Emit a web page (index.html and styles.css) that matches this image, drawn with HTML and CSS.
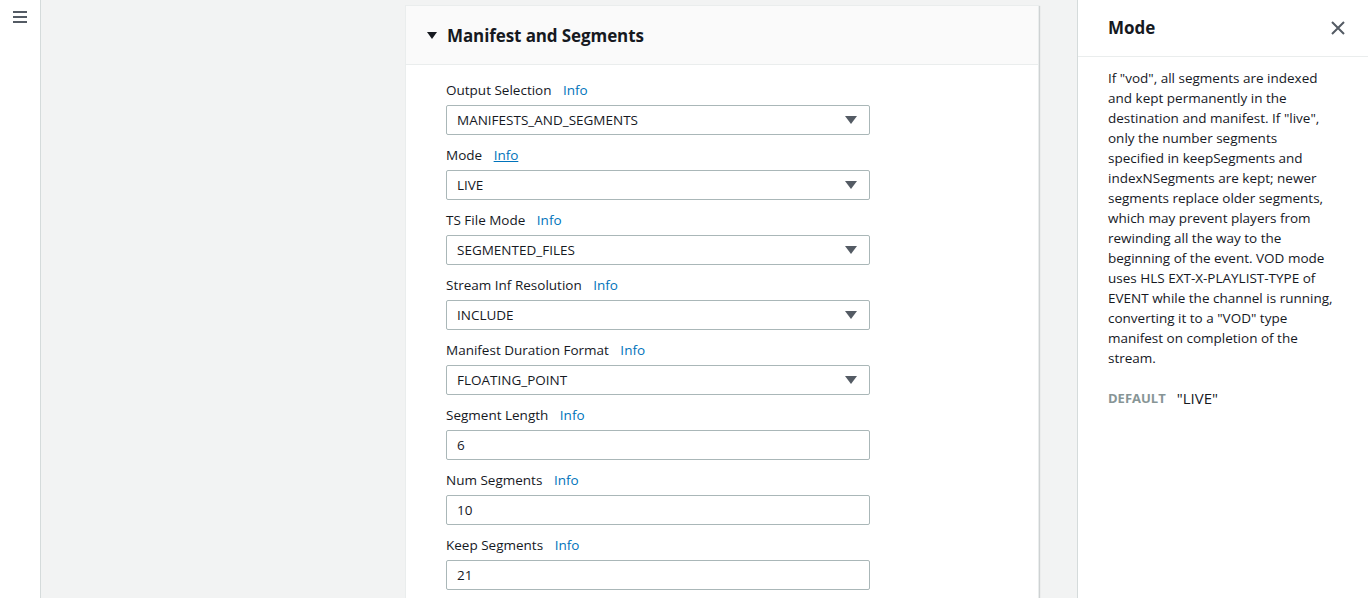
FILE: index.html
```html
<!DOCTYPE html>
<html>
<head>
<meta charset="utf-8">
<link rel="stylesheet" href="styles.css">
</head>
<body>
<div class="app">
  <nav class="nav">
    <svg class="burger" width="14" height="12" viewBox="0 0 14 12"><rect x="0" y="0" width="14" height="2" fill="#545b64"/><rect x="0" y="5" width="14" height="2" fill="#545b64"/><rect x="0" y="10" width="14" height="2" fill="#545b64"/></svg>
  </nav>
  <main class="main">
    <section class="card">
      <header class="card-head">
        <svg class="caret" width="10" height="8" viewBox="0 0 10 8"><polygon points="0,0 10,0 5,7" fill="#16191f"/></svg>
        <h2>Manifest and Segments</h2>
      </header>
      <div class="card-body">
        <div class="field"><div class="label">Output Selection <a class="info">Info</a></div><div class="select">MANIFESTS_AND_SEGMENTS<span class="tri"></span></div></div>
        <div class="field"><div class="label">Mode <a class="info ul">Info</a></div><div class="select">LIVE<span class="tri"></span></div></div>
        <div class="field"><div class="label">TS File Mode <a class="info">Info</a></div><div class="select">SEGMENTED_FILES<span class="tri"></span></div></div>
        <div class="field"><div class="label">Stream Inf Resolution <a class="info">Info</a></div><div class="select">INCLUDE<span class="tri"></span></div></div>
        <div class="field"><div class="label">Manifest Duration Format <a class="info">Info</a></div><div class="select">FLOATING_POINT<span class="tri"></span></div></div>
        <div class="field"><div class="label">Segment Length <a class="info">Info</a></div><div class="input">6</div></div>
        <div class="field"><div class="label">Num Segments <a class="info">Info</a></div><div class="input">10</div></div>
        <div class="field"><div class="label">Keep Segments <a class="info">Info</a></div><div class="input">21</div></div>
      </div>
    </section>
  </main>
  <aside class="panel">
    <header class="panel-head">
      <h2>Mode</h2>
      <svg class="close" width="14" height="14" viewBox="0 0 14 14"><path d="M1 1L13 13M13 1L1 13" stroke="#545b64" stroke-width="2" fill="none"/></svg>
    </header>
    <div class="panel-body">
      <p>If "vod", all segments are indexed and kept permanently in the destination and manifest. If "live", only the number segments specified in keepSegments and indexNSegments are kept; newer segments replace older segments, which may prevent players from rewinding all the way to the beginning of the event. VOD mode uses HLS EXT-X-PLAYLIST-TYPE of EVENT while the channel is running, converting it to a "VOD" type manifest on completion of the stream.</p>
      <div class="default"><span class="dk">DEFAULT</span><span class="dv">"LIVE"</span></div>
    </div>
  </aside>
</div>
</body>
</html>
```

FILE: styles.css
```css
* { box-sizing: border-box; }
html, body { margin: 0; padding: 0; }
body {
  font-family: "Open Sans", "Noto Sans", sans-serif;
  color: #16191f;
  font-size: 14px;
  background: #f2f3f3;
  overflow: hidden;
}
.app { display: flex; height: 598px; }
.nav {
  width: 41px;
  flex: none;
  background: #fff;
  border-right: 1px solid #d5dbdb;
  padding: 11px 0 0 13px;
}
.burger { display: block; }
.main {
  flex: 1;
  padding: 5px 0 0 364px;
}
.card {
  width: 634px;
  background: #fff;
  border: 1px solid #eaeded;
  box-shadow: 1px 1px 1px rgba(0,28,36,0.15);
  height: 620px;
}
.card-head {
  height: 59px;
  background: #fafafa;
  border-bottom: 1px solid #eaeded;
  display: flex;
  align-items: center;
  padding-left: 21px;
}
.caret { margin-right: 10px; margin-top: 1px; }
.card-head h2 {
  margin: 0;
  font-size: 17px;
  font-weight: 700;
  letter-spacing: -0.1px;
}
.card-body { padding: 15px 0 0 40px; }
.field { width: 424px; height: 65px; }
.label {
  height: 21px;
  line-height: 21px;
  font-size: 13.5px;
  margin-bottom: 4px;
}
.info { color: #0073bb; margin-left: 8px; }
.info.ul { text-decoration: underline; }
.select, .input {
  height: 30px;
  border: 1px solid #aab7b8;
  border-radius: 2px;
  background: #fff;
  padding: 0 10px;
  line-height: 29px;
  font-size: 13.5px;
  position: relative;
}
.tri {
  position: absolute;
  right: 12px;
  top: 10px;
  width: 0; height: 0;
  border-left: 6px solid transparent;
  border-right: 6px solid transparent;
  border-top: 8px solid #545b64;
}
.panel {
  width: 291px;
  flex: none;
  background: #fff;
  border-left: 1px solid #d5dbdb;
}
.panel-head {
  height: 57px;
  border-bottom: 1px solid #eaeded;
  display: flex;
  align-items: center;
  justify-content: space-between;
  padding: 0 23px 0 30px;
}
.panel-head h2 { margin: 0; font-size: 17px; font-weight: 700; margin-top: -1px; }
.panel-body { padding: 11px 0 0 30px; }
.panel-body p {
  margin: 0;
  width: 226px;
  font-size: 13.5px;
  line-height: 20px;
}
.default { margin-top: 20px; display: flex; align-items: center; }
.dk { font-size: 13px; font-weight: 700; color: #879596; margin-right: 11px; }
.dv { font-size: 15px; }
```
